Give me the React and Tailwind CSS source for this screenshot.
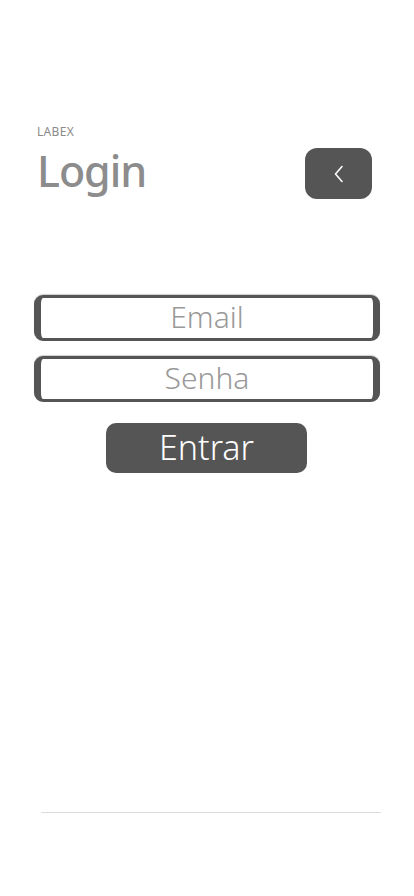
export default function App() {
  const font = { fontFamily: '"Noto Sans", Lato, sans-serif' };
  return (
    <div className="w-[414px] h-[896px] bg-white flex flex-col" style={font}>
      <div className="pt-[124px] px-[37px] flex items-start justify-between pr-[42px]">
        <div className="flex flex-col">
          <span className="text-[12px] leading-[16px] text-[#8a8a8a] tracking-wide">LABEX</span>
          <span className="text-[43px] leading-[50px] mt-[6px] font-medium text-[#8c8c8c] tracking-tight">Login</span>
        </div>
        <button className="mt-[24px] w-[67px] h-[51px] rounded-[12px] bg-[#555555] flex items-center justify-center">
          <svg width="14" height="22" viewBox="0 0 14 22" fill="none">
            <path d="M10 3.5 L3.5 11 L10 18.5" stroke="white" strokeWidth="1.6" strokeLinecap="round" strokeLinejoin="round" />
          </svg>
        </button>
      </div>
      <div className="mt-[96px] px-[34px] flex flex-col gap-[15px]">
        <div className="h-[46px] rounded-[9px] border-x-[7px] border-y-[3px] border-[#555555] bg-white flex items-center justify-center shadow-[0_-1px_1px_#cfcfcf]">
          <span className="text-[30px] font-light text-[#999999] mb-[4px]">Email</span>
        </div>
        <div className="h-[46px] rounded-[9px] border-x-[7px] border-y-[3px] border-[#555555] bg-white flex items-center justify-center shadow-[0_-1px_1px_#cfcfcf]">
          <span className="text-[30px] font-light text-[#999999] mb-[4px]">Senha</span>
        </div>
      </div>
      <div className="mt-[21px] flex justify-center">
        <button className="w-[201px] h-[50px] rounded-[10px] bg-[#555555] flex items-center justify-center ml-[-1px]">
          <span className="text-[34px] font-light text-white leading-none mb-[2px]">Entrar</span>
        </button>
      </div>
      <div className="flex-1" />
      <div className="ml-[41px] mr-[33px] h-[1px] bg-[#dcdcdc] mb-[83px]" />
    </div>
  );
}
